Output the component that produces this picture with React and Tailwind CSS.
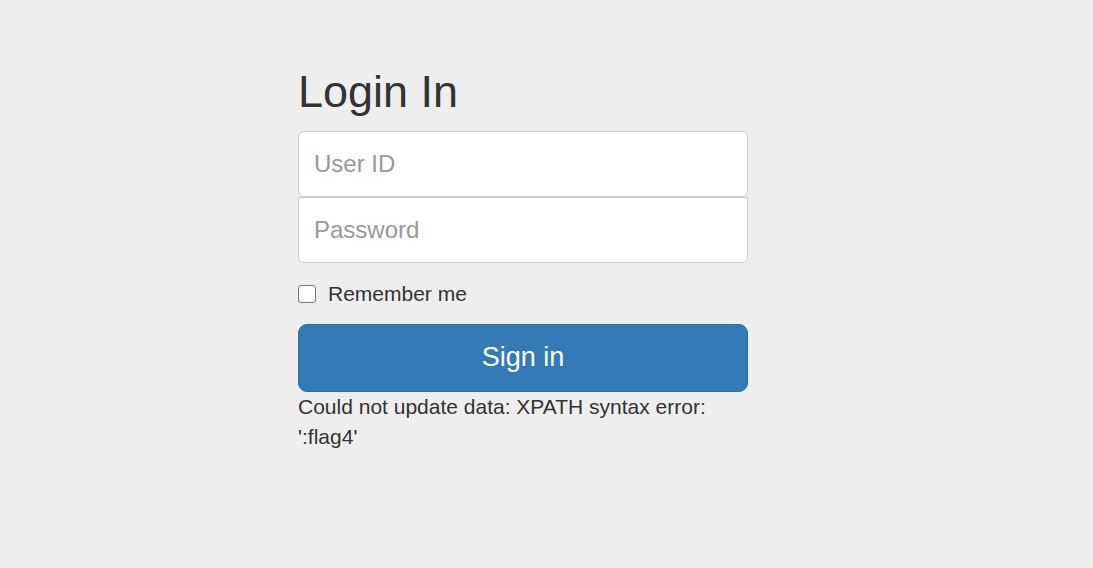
export default function App() {
  return (
    <div className="min-h-[568px] bg-[#eeeeee] text-[#333333] font-['Liberation_Sans',Arial,sans-serif]">
      <form className="w-[450px] ml-[298px] pt-[67px]" onSubmit={(e) => e.preventDefault()}>
        <h2 className="text-[45px] leading-[49.5px] font-normal mb-[14px]">Login In</h2>
        <input
          type="text"
          placeholder="User ID"
          className="block w-full h-[66px] px-[15px] text-[24px] bg-white border border-[#cccccc] rounded-[6px] placeholder:text-[#999999] outline-none"
        />
        <input
          type="password"
          placeholder="Password"
          className="block w-full h-[66px] px-[15px] text-[24px] bg-white border border-[#cccccc] rounded-b-[6px] placeholder:text-[#999999] outline-none"
        />
        <label className="flex items-center mt-[16px] h-[30px] text-[21px] leading-[30px] cursor-pointer">
          <input
            type="checkbox"
            className="appearance-none w-[18px] h-[18px] border border-[#767676] rounded-[3px] bg-white mr-[12px] shrink-0"
          />
          Remember me
        </label>
        <button
          type="submit"
          className="block w-full mt-[15px] h-[68px] bg-[#337ab7] border border-[#2e6da4] rounded-[9px] text-white text-[27px]"
        >
          Sign in
        </button>
        <p className="text-[21px] leading-[30px]">
          Could not update data: XPATH syntax error: ':flag4'
        </p>
      </form>
    </div>
  );
}
